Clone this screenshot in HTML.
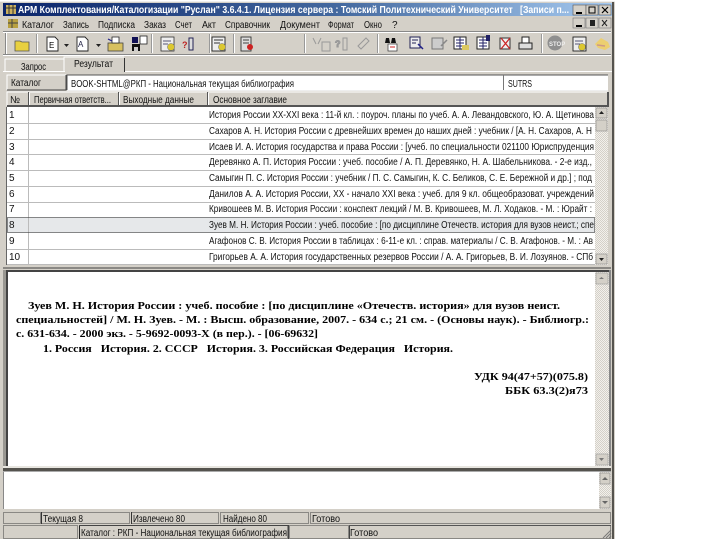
<!DOCTYPE html>
<html><head><meta charset="utf-8"><style>
html,body{margin:0;padding:0;background:#fff;width:720px;height:540px;overflow:hidden}
svg{display:block;filter:blur(.3px)}
text{font-family:"Liberation Sans",sans-serif;font-size:10px;fill:#111;white-space:pre}
.s{font-family:"Liberation Serif",serif;font-size:11px;font-weight:bold;fill:#000}
.w{fill:#fff;font-weight:bold;font-size:10px}
.g{fill:#d4d0c8}
</style></head><body>
<svg xmlns="http://www.w3.org/2000/svg" width="720" height="540" viewBox="0 0 720 540">
<defs>
<linearGradient id="tb" x1="0" x2="1" y1="0" y2="0"><stop offset="0" stop-color="#0a246a"/><stop offset=".55" stop-color="#44699f"/><stop offset="1" stop-color="#a6caf0"/></linearGradient>
<pattern id="ck" width="2" height="2" patternUnits="userSpaceOnUse"><rect width="2" height="2" fill="#f2f0ec"/><rect width="1" height="1" fill="#d4d0c8"/><rect x="1" y="1" width="1" height="1" fill="#d4d0c8"/></pattern>
</defs>
<rect x="0" y="0" width="720" height="540" fill="#fff"/>
<rect x="0" y="1" width="615" height="538" fill="#d4d0c8"/>
<rect x="612" y="1" width="2" height="538" fill="#55534e"/>
<rect x="0" y="1" width="615" height="1" fill="#eee"/>
<!-- title -->
<rect x="3" y="3" width="609" height="13" fill="url(#tb)"/>
<rect x="6" y="5" width="10" height="9" fill="#c9b060"/><path d="M6 8h10M9 5v9M13 5v9" stroke="#333" fill="none"/>
<text class="w" x="18" y="13" textLength="551" lengthAdjust="spacingAndGlyphs">АРМ Комплектования/Каталогизации "Руслан" 3.6.4.1. Лицензия сервера : Томский Политехнический Университет   [Записи п...</text>
<g>
<rect x="573" y="5" width="13" height="10" class="g" stroke="#555" stroke-width=".6"/><rect x="576" y="12" width="6" height="2" fill="#000"/>
<rect x="586" y="5" width="12" height="10" class="g" stroke="#555" stroke-width=".6"/><rect x="589" y="7" width="6" height="6" fill="none" stroke="#000"/>
<rect x="599" y="5" width="12" height="10" class="g" stroke="#555" stroke-width=".6"/><path d="M602 7l6 6M608 7l-6 6" stroke="#000" stroke-width="1.2"/>
</g>
<!-- menu -->
<rect x="8" y="19" width="10" height="9" fill="#b8a040"/><path d="M8 23h10M12 19v9" stroke="#444"/>
<text x="22" y="28" textLength="32" lengthAdjust="spacingAndGlyphs">Каталог</text>
<text x="63" y="28" textLength="26" lengthAdjust="spacingAndGlyphs">Запись</text>
<text x="98" y="28" textLength="37" lengthAdjust="spacingAndGlyphs">Подписка</text>
<text x="144" y="28" textLength="22" lengthAdjust="spacingAndGlyphs">Заказ</text>
<text x="175" y="28" textLength="17" lengthAdjust="spacingAndGlyphs">Счет</text>
<text x="202" y="28" textLength="14" lengthAdjust="spacingAndGlyphs">Акт</text>
<text x="225" y="28" textLength="45" lengthAdjust="spacingAndGlyphs">Справочник</text>
<text x="280" y="28" textLength="40" lengthAdjust="spacingAndGlyphs">Документ</text>
<text x="328" y="28" textLength="26" lengthAdjust="spacingAndGlyphs">Формат</text>
<text x="364" y="28" textLength="18" lengthAdjust="spacingAndGlyphs">Окно</text>
<text x="392" y="28">?</text>
<rect x="573" y="18" width="12" height="10" class="g" stroke="#777" stroke-width=".6"/><rect x="576" y="25" width="6" height="2" fill="#000"/>
<rect x="586" y="18" width="12" height="10" class="g" stroke="#777" stroke-width=".6"/><rect x="590" y="20" width="5" height="6" fill="#222"/>
<rect x="599" y="18" width="12" height="10" class="g" stroke="#777" stroke-width=".6"/><path d="M602 20l5 6M607 20l-5 6" stroke="#222"/>
<!-- toolbar -->
<rect x="3" y="31" width="608" height="1" fill="#888"/><rect x="3" y="32" width="608" height="1" fill="#fff"/>
<rect x="3" y="54" width="608" height="1" fill="#888"/><rect x="3" y="55" width="608" height="1" fill="#fff"/>
<rect x="5" y="33" width="1" height="21" fill="#888"/><rect x="6" y="33" width="1" height="21" fill="#fff"/>
<g fill="#999"><rect x="36" y="34" width="1" height="19"/><rect x="151" y="34" width="1" height="19"/><rect x="209" y="34" width="1" height="19"/><rect x="233" y="34" width="1" height="19"/><rect x="304" y="34" width="1" height="19"/><rect x="377" y="34" width="1" height="19"/><rect x="541" y="34" width="1" height="19"/></g>
<g fill="#fff"><rect x="37" y="34" width="1" height="19"/><rect x="152" y="34" width="1" height="19"/><rect x="210" y="34" width="1" height="19"/><rect x="234" y="34" width="1" height="19"/><rect x="305" y="34" width="1" height="19"/><rect x="378" y="34" width="1" height="19"/><rect x="542" y="34" width="1" height="19"/></g>
<!-- icons -->
<path d="M15 41h5l2 1h7v9H15z" fill="#e8d040" stroke="#555" stroke-width=".8"/>
<path d="M47 37h8l3 3v11H47z" fill="#fff" stroke="#222" stroke-width=".9"/><text x="49" y="48" style="font-size:8px;fill:#000">E</text>
<path d="M64 44h5l-2.5 3z" fill="#222"/>
<path d="M77 37h8l3 3v11H77z" fill="#fff" stroke="#222" stroke-width=".9"/><text x="78" y="47" style="font-size:8px;fill:#224">A</text>
<path d="M96 44h5l-2.5 3z" fill="#222"/>
<rect x="108" y="43" width="15" height="8" fill="#d8c060" stroke="#444" stroke-width=".8"/><path d="M112 37h7v6h-7z" fill="#fff" stroke="#222" stroke-width=".8"/><path d="M108 39l4 2" stroke="#228" stroke-width="1.2"/>
<rect x="132" y="37" width="6" height="6" fill="#115"/><rect x="140" y="36" width="7" height="8" fill="#fff" stroke="#222" stroke-width=".8"/><rect x="132" y="44" width="8" height="7" fill="#111"/><rect x="134" y="47" width="4" height="4" fill="#ccc"/>
<rect x="161" y="37" width="13" height="14" fill="#eee" stroke="#333" stroke-width=".8"/><circle cx="171" cy="47" r="3.5" fill="#dcc830" stroke="#666" stroke-width=".5"/><path d="M163 41h8M163 44h5" stroke="#557"/>
<text x="182" y="48" style="font-size:9px;font-weight:bold;fill:#b22">?</text><path d="M189 38h4v12h-4z" fill="#ddd" stroke="#225" stroke-width="1"/>
<rect x="212" y="37" width="13" height="14" fill="#eee" stroke="#222" stroke-width=".9"/><circle cx="222" cy="47" r="3.5" fill="#dcc830" stroke="#666" stroke-width=".5"/><path d="M214 40h9M214 43h6" stroke="#333"/>
<rect x="241" y="37" width="10" height="14" fill="#ddd" stroke="#333" stroke-width=".9"/><circle cx="250" cy="47" r="3" fill="#c22"/><path d="M243 40h6M243 43h6" stroke="#444"/>
<!-- greyed -->
<g stroke="#999" fill="none"><path d="M313 38l3 6M321 38l-3 6M322 42h8v9h-8z"/><text x="335" y="47" style="fill:#aaa;font-size:9px;font-weight:bold">?</text><path d="M343 38h4v12h-4zM358 46l8-8 3 3-8 8z"/></g>
<!-- right group -->
<path d="M386 38h3l1 5h-5zM392 38h3l1 5h-5z" fill="#111"/><rect x="388" y="44" width="9" height="7" fill="#fff" stroke="#333" stroke-width=".7"/><path d="M390 47h5" stroke="#c22"/>
<rect x="410" y="37" width="10" height="11" fill="#eee" stroke="#225" stroke-width="1"/><path d="M418 44l5 5" stroke="#228" stroke-width="1.5"/><path d="M412 40h6M412 43h4" stroke="#225"/>
<rect x="432" y="38" width="11" height="11" fill="#ccc" stroke="#777"/><path d="M441 46l6-6" stroke="#888" stroke-width="1.5"/>
<rect x="454" y="37" width="12" height="12" fill="#fff" stroke="#222"/><path d="M456 40h8M456 43h8M456 46h8M460 37v12" stroke="#226"/><path d="M462 45h7v5h-7z" fill="#dcc860"/>
<rect x="477" y="37" width="12" height="12" fill="#fff" stroke="#222"/><path d="M479 40h8M479 43h8M479 46h8M483 37v12" stroke="#226"/><rect x="486" y="35" width="4" height="6" fill="#226"/>
<rect x="500" y="38" width="10" height="11" fill="#eee" stroke="#333"/><path d="M501 38l9 11M510 38l-9 11" stroke="#c22" stroke-width="1.2"/>
<rect x="522" y="37" width="7" height="6" fill="#fff" stroke="#222"/><rect x="519" y="43" width="13" height="6" fill="#ddd" stroke="#222"/>
<circle cx="555" cy="43" r="7.5" fill="#8f8f8f"/><text x="549" y="46" style="fill:#eee;font-size:6px;font-weight:bold">STOP</text>
<rect x="573" y="37" width="13" height="14" fill="#eee" stroke="#222" stroke-width=".9"/><circle cx="582" cy="47" r="3.5" fill="#dcc830" stroke="#666" stroke-width=".5"/><path d="M575 41h8M575 44h5" stroke="#557"/>
<path d="M595 44l6-6 7 4 2 5-5 3-7-2z" fill="#eccf70"/><path d="M597 45l8 1" stroke="#c98" stroke-width="1.5"/>
<!-- tabs -->
<rect x="3" y="71" width="609" height="1" fill="#fff"/>
<rect x="5" y="60" width="59" height="11" fill="#d4d0c8"/><path d="M5 71V59h59" stroke="#fff" fill="none"/>
<path d="M64 72V57h60" stroke="#fff" fill="none"/><rect x="65" y="58" width="59" height="15" fill="#d4d0c8"/><rect x="124" y="58" width="1" height="14" fill="#333"/>
<text x="21" y="70" textLength="25" lengthAdjust="spacingAndGlyphs">Запрос</text>
<text x="74" y="67" textLength="39" lengthAdjust="spacingAndGlyphs">Результат</text>
<!-- catalog row -->
<rect x="7" y="75" width="59" height="15" class="g"/><path d="M7 90V75h59" stroke="#fff" fill="none"/><path d="M7 90h59V75" stroke="#444" fill="none"/>
<text x="11" y="86" textLength="30" lengthAdjust="spacingAndGlyphs">Каталог</text>
<rect x="67" y="75" width="541" height="15" fill="#fff"/><path d="M67 90V75h541" stroke="#555" fill="none"/><rect x="503" y="75" width="1" height="15" fill="#777"/><rect x="67" y="90" width="541" height="1" fill="#eee"/>
<text x="71" y="87" textLength="223" lengthAdjust="spacingAndGlyphs">BOOK-SHTML@РКП - Национальная текущая библиография</text>
<text x="508" y="87" textLength="24" lengthAdjust="spacingAndGlyphs">SUTRS</text>
<!-- header -->
<rect x="7" y="92" width="601" height="15" class="g"/>
<path d="M7 106V92h601" stroke="#fff" fill="none"/><rect x="7" y="105" width="601" height="2" fill="#555"/><rect x="607" y="92" width="2" height="15" fill="#555"/>
<g fill="#555"><rect x="28" y="92" width="1" height="14"/><rect x="118" y="92" width="1" height="14"/><rect x="207" y="92" width="1" height="14"/></g>
<g fill="#fff"><rect x="29" y="93" width="1" height="12"/><rect x="119" y="93" width="1" height="12"/><rect x="208" y="93" width="1" height="12"/></g>
<text x="10" y="103" textLength="10" lengthAdjust="spacingAndGlyphs">№</text>
<text x="34" y="103" textLength="77" lengthAdjust="spacingAndGlyphs">Первичная ответств...</text>
<text x="123" y="103" textLength="71" lengthAdjust="spacingAndGlyphs">Выходные данные</text>
<text x="213" y="103" textLength="74" lengthAdjust="spacingAndGlyphs">Основное заглавие</text>
<!-- list -->
<rect x="7" y="107" width="588" height="158" fill="#fff"/>
<rect x="7" y="217" width="588" height="16" fill="#e6e8ea"/>
<g fill="#bbb"><rect x="7" y="123" width="588" height="1"/><rect x="7" y="139" width="588" height="1"/><rect x="7" y="154" width="588" height="1"/><rect x="7" y="170" width="588" height="1"/><rect x="7" y="186" width="588" height="1"/><rect x="7" y="202" width="588" height="1"/><rect x="7" y="249" width="588" height="1"/><rect x="28" y="107" width="1" height="158"/><rect x="7" y="264" width="588" height="1"/></g>
<rect x="7.5" y="217.5" width="587" height="15" fill="none" stroke="#222" stroke-dasharray="1 1"/>
<rect x="6" y="107" width="1" height="158" fill="#666"/>
<g>
<text x="9" y="118">1</text><text x="209" y="118" textLength="385" lengthAdjust="spacingAndGlyphs">История России XX-XXI века : 11-й кл. : поуроч. планы по учеб. А. А. Левандовского, Ю. А. Щетинова</text>
<text x="9" y="134">2</text><text x="209" y="134" textLength="383" lengthAdjust="spacingAndGlyphs">Сахаров А. Н. История России с древнейших времен до наших дней : учебник / [А. Н. Сахаров, А. Н</text>
<text x="9" y="150">3</text><text x="209" y="150" textLength="385" lengthAdjust="spacingAndGlyphs">Исаев И. А. История государства и права России : [учеб. по специальности 021100 Юриспруденция</text>
<text x="9" y="165">4</text><text x="209" y="165" textLength="383" lengthAdjust="spacingAndGlyphs">Деревянко А. П. История России : учеб. пособие / А. П. Деревянко, Н. А. Шабельникова. - 2-е изд.,</text>
<text x="9" y="181">5</text><text x="209" y="181" textLength="383" lengthAdjust="spacingAndGlyphs">Самыгин П. С. История России : учебник / П. С. Самыгин, К. С. Беликов, С. Е. Бережной и др.] ; под</text>
<text x="9" y="197">6</text><text x="209" y="197" textLength="385" lengthAdjust="spacingAndGlyphs">Данилов А. А. История России, XX - начало XXI века : учеб. для 9 кл. общеобразоват. учреждений</text>
<text x="9" y="212">7</text><text x="209" y="212" textLength="383" lengthAdjust="spacingAndGlyphs">Кривошеев М. В. История России : конспект лекций / М. В. Кривошеев, М. Л. Ходаков. - М. : Юрайт :</text>
<text x="9" y="228">8</text><text x="209" y="228" textLength="385" lengthAdjust="spacingAndGlyphs">Зуев М. Н. История России : учеб. пособие : [по дисциплине Отечеств. история для вузов неист.; спе</text>
<text x="9" y="244">9</text><text x="209" y="244" textLength="384" lengthAdjust="spacingAndGlyphs">Агафонов С. В. История России в таблицах : 6-11-е кл. : справ. материалы / С. В. Агафонов. - М. : Ав</text>
<text x="9" y="260">10</text><text x="209" y="260" textLength="384" lengthAdjust="spacingAndGlyphs">Григорьев А. А. История государственных резервов России / А. А. Григорьев, В. И. Лозуянов. - СПб</text>
</g>
<!-- list scrollbar -->
<rect x="595" y="107" width="13" height="158" fill="url(#ck)"/>
<rect x="596" y="108" width="11" height="10" class="g" stroke="#888" stroke-width=".6"/><path d="M599 114h5l-2.5-3z" fill="#222"/>
<rect x="596" y="120" width="11" height="11" class="g" stroke="#888" stroke-width=".6"/>
<rect x="596" y="254" width="11" height="10" class="g" stroke="#888" stroke-width=".6"/><path d="M599 258h5l-2.5 3z" fill="#222"/>
<!-- splitter / preview -->
<rect x="3" y="267" width="608" height="2" fill="#8a8884"/>
<rect x="3" y="270" width="3" height="198" fill="#9a9892"/><rect x="6" y="270" width="2" height="198" fill="#444"/>
<rect x="6" y="270" width="604" height="2" fill="#444"/>
<rect x="8" y="272" width="587" height="194" fill="#fff"/>
<rect x="595" y="272" width="14" height="194" fill="url(#ck)"/>
<rect x="596" y="273" width="12" height="11" class="g" stroke="#999" stroke-width=".6"/><path d="M599 279h5l-2.5-2z" fill="#777"/>
<rect x="596" y="454" width="12" height="11" class="g" stroke="#999" stroke-width=".6"/><path d="M599 458h5l-2.5 3z" fill="#777"/>
<rect x="609" y="270" width="2" height="198" fill="#888"/>
<text class="s" x="28" y="309" textLength="532" lengthAdjust="spacingAndGlyphs">Зуев М. Н. История России : учеб. пособие : [по дисциплине «Отечеств. история» для вузов неист.</text>
<text class="s" x="16" y="323" textLength="573" lengthAdjust="spacingAndGlyphs">специальностей] / М. Н. Зуев. - М. : Высш. образование, 2007. - 634 с.; 21 см. - (Основы наук). - Библиогр.:</text>
<text class="s" x="16" y="337" textLength="302" lengthAdjust="spacingAndGlyphs">с. 631-634. - 2000 экз. - 5-9692-0093-Х (в пер.). - [06-69632]</text>
<text class="s" x="43" y="352" textLength="410" lengthAdjust="spacingAndGlyphs">1. Россия   История. 2. СССР   История. 3. Российская Федерация   История.</text>
<text class="s" x="474" y="380" textLength="114" lengthAdjust="spacingAndGlyphs">УДК 94(47+57)(075.8)</text>
<text class="s" x="505" y="394" textLength="83" lengthAdjust="spacingAndGlyphs">ББК 63.3(2)я73</text>
<!-- lower splitter -->
<rect x="3" y="466" width="608" height="2" fill="#e8e6e0"/>
<rect x="3" y="468" width="608" height="3" fill="#55534e"/>
<rect x="3" y="471" width="608" height="1" fill="#aaa"/>
<!-- memo -->
<rect x="3" y="472" width="596" height="37" fill="#fff"/><rect x="3" y="472" width="1" height="37" fill="#888"/>
<rect x="599" y="472" width="12" height="37" fill="url(#ck)"/>
<rect x="600" y="473" width="10" height="11" class="g" stroke="#888" stroke-width=".6"/><path d="M602 480h6l-3-3z" fill="#666"/>
<rect x="600" y="497" width="10" height="11" class="g" stroke="#888" stroke-width=".6"/><path d="M602 501h6l-3 3z" fill="#666"/>
<!-- status 1 -->
<g fill="none" stroke="#8a8884">
<rect x="3.5" y="512.5" width="37" height="11"/><rect x="41.5" y="512.5" width="88" height="11"/><rect x="131.5" y="512.5" width="87" height="11"/><rect x="220.5" y="512.5" width="88" height="11"/><rect x="310.5" y="512.5" width="300" height="11"/>
<rect x="3.5" y="525.5" width="74" height="13"/><rect x="79.5" y="525.5" width="208" height="13"/><rect x="289.5" y="525.5" width="59" height="13"/><rect x="349.5" y="525.5" width="261" height="13"/>
</g>
<rect x="41" y="512" width="1" height="12" fill="#333"/><rect x="131" y="512" width="1" height="12" fill="#333"/><rect x="79" y="525" width="1" height="14" fill="#222"/><rect x="288" y="525" width="1" height="14" fill="#444"/><rect x="349" y="525" width="1" height="14" fill="#444"/>
<rect x="79" y="525" width="209" height="1" fill="#444"/><rect x="349" y="525" width="262" height="1" fill="#555"/>
<text x="43" y="522" textLength="40" lengthAdjust="spacingAndGlyphs">Текущая 8</text>
<text x="133" y="522" textLength="52" lengthAdjust="spacingAndGlyphs">Извлечено 80</text>
<text x="223" y="522" textLength="44" lengthAdjust="spacingAndGlyphs">Найдено 80</text>
<text x="312" y="522" textLength="28" lengthAdjust="spacingAndGlyphs">Готово</text>
<text x="81" y="536" textLength="206" lengthAdjust="spacingAndGlyphs">Каталог : РКП - Национальная текущая библиография</text>
<text x="350" y="536" textLength="28" lengthAdjust="spacingAndGlyphs">Готово</text>
<path d="M603 538l8-8M606 538l5-5M609 538l2-2" stroke="#777"/>
</svg>
</body></html>
